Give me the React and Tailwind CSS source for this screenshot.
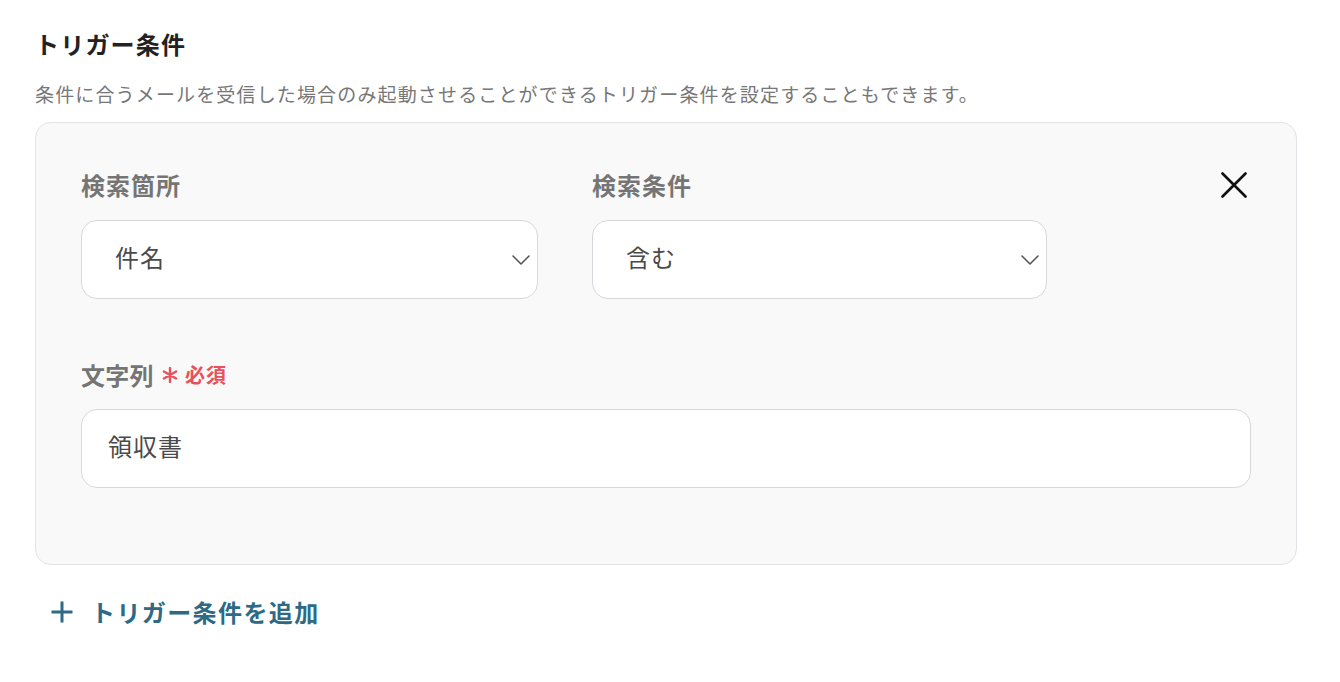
import React from "react";

function Chevron() {
  return (
    <svg width="18" height="10" viewBox="0 0 18 10" fill="none" className="shrink-0">
      <path d="M1 1 L9 9 L17 1" stroke="#555" strokeWidth="1.6" strokeLinecap="round" strokeLinejoin="round" />
    </svg>
  );
}

function CloseIcon() {
  return (
    <svg width="26" height="26" viewBox="0 0 26 26" fill="none">
      <path d="M1.5 1.5 L24.5 24.5 M24.5 1.5 L1.5 24.5" stroke="#111" strokeWidth="2.6" strokeLinecap="round" />
    </svg>
  );
}

function Asterisk() {
  return (
    <svg width="16" height="16" viewBox="0 0 16 16" fill="none" className="shrink-0">
      <path d="M8 1 V15 M1.9 4.5 L14.1 11.5 M14.1 4.5 L1.9 11.5" stroke="#e8505b" strokeWidth="2.4" strokeLinecap="round" />
    </svg>
  );
}

function SelectBox({ value }) {
  return (
    <div className="flex h-[79px] items-center justify-between rounded-[16px] border border-[#d6d8dc] bg-white pl-[33px] pr-[7px]">
      <span className="mb-[5px] text-[24px] tracking-[1px] text-[#4a4a4a]">{value}</span>
      <Chevron />
    </div>
  );
}

export default function App() {
  return (
    <div className="min-h-[682px] bg-white px-[35px] pt-[27px] font-['Noto_Sans_CJK_JP','Noto_Sans',sans-serif]">
      <h2 className="text-[24px] font-bold leading-[34px] tracking-[1.2px] text-[#222]">トリガー条件</h2>
      <p className="mt-[20px] text-[19px] leading-[26px] tracking-[1.15px] text-[#777]">
        条件に合うメールを受信した場合のみ起動させることができるトリガー条件を設定することもできます。
      </p>
      <div className="mt-[15px] w-[1262px] rounded-[16px] border border-[#e2e3e6] bg-[#f9f9f9] px-[45px] pb-[76px] pt-[48px]">
        <div className="flex items-start">
          <div className="w-[457px]">
            <div className="text-[24px] font-bold leading-[28px] tracking-[1px] text-[#757575]">検索箇所</div>
            <div className="mt-[21px]">
              <SelectBox value="件名" />
            </div>
          </div>
          <div className="ml-[54px] w-[455px]">
            <div className="text-[24px] font-bold leading-[28px] tracking-[1px] text-[#757575]">検索条件</div>
            <div className="mt-[21px]">
              <SelectBox value="含む" />
            </div>
          </div>
          <div className="flex flex-1 justify-end pr-[4px] pt-[1px]">
            <CloseIcon />
          </div>
        </div>
        <div className="mt-[62px]">
          <div className="flex items-center font-bold leading-[28px]">
            <span className="text-[24px] tracking-[0.3px] text-[#757575]">文字列</span>
            <span className="ml-[8px] flex items-center">
              <Asterisk />
            </span>
            <span className="ml-[7px] text-[20px] tracking-[1px] text-[#e8505b]">必須</span>
          </div>
          <div className="mt-[20px] flex h-[79px] items-center rounded-[16px] border border-[#d6d8dc] bg-white px-[26px]">
            <span className="mb-[5px] text-[24px] tracking-[1px] text-[#4a4a4a]">領収書</span>
          </div>
        </div>
      </div>
      <button className="mt-[30px] flex items-center pl-[15px] text-[#2e6a84]">
        <svg width="24" height="24" viewBox="0 0 24 24" fill="none">
          <path d="M12 1.5 V22.5 M1.5 12 H22.5" stroke="#2e6a84" strokeWidth="3" />
        </svg>
        <span className="ml-[17px] text-[24px] font-bold leading-[34px] tracking-[1.4px]">トリガー条件を追加</span>
      </button>
    </div>
  );
}
